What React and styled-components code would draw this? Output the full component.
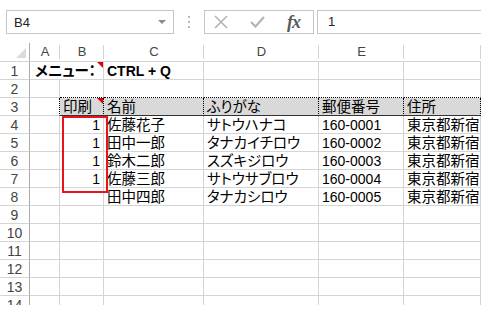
import React from 'react'
import styled, { createGlobalStyle } from 'styled-components'

const GlobalStyle = createGlobalStyle`
  html, body { margin: 0; padding: 0; background: #fff; }
  body { font-family: "Liberation Sans", "Noto Sans CJK JP", sans-serif; }
`

const Screen = styled.div`
  width: 481px;
  height: 313px;
  overflow: hidden;
  background: #fff;
`

const FormulaBar = styled.div`
  height: 43px;
  box-sizing: border-box;
  padding: 10px 0 0 6px;
  display: flex;
  align-items: flex-start;
`

const NameBox = styled.div`
  width: 168px;
  height: 24px;
  box-sizing: border-box;
  border: 1px solid #c6c6c6;
  display: flex;
  align-items: center;
  justify-content: space-between;
  padding: 0 7px 0 7px;
  font-size: 13px;
  color: #222;
`

const DropArrow = styled.span`
  width: 0;
  height: 0;
  border-left: 4px solid transparent;
  border-right: 4px solid transparent;
  border-top: 4px solid #8a8a8a;
`

const Grip = styled.div`
  width: 30px;
  height: 24px;
  display: flex;
  flex-direction: column;
  align-items: center;
  justify-content: center;
  gap: 3px;
  span {
    width: 2px;
    height: 2px;
    background: #b8b8b8;
  }
`

const FxBox = styled.div`
  width: 110px;
  height: 24px;
  box-sizing: border-box;
  border: 1px solid #c6c6c6;
  display: flex;
  align-items: center;
  padding-left: 9px;
  gap: 22px;
`

const FxLabel = styled.span`
  font-family: "Liberation Serif", serif;
  font-style: italic;
  font-weight: bold;
  font-size: 18px;
  color: #5a5a5a;
  letter-spacing: -1px;
`

const FormulaInput = styled.div`
  flex: 1;
  height: 24px;
  margin-left: 3px;
  box-sizing: border-box;
  border: 1px solid #c6c6c6;
  border-right: none;
  padding-left: 10px;
  font-size: 13px;
  line-height: 22px;
  color: #222;
`

const Sheet = styled.div`
  position: relative;
  height: 262px;
  overflow: hidden;
  display: grid;
  grid-template-columns: 30px 30px 44px 100px 115px 85px 1fr;
  grid-template-rows: 19px;
  grid-auto-rows: 18px;
`

const Corner = styled.div`
  box-sizing: border-box;
  border-right: 1px solid #ababab;
  border-bottom: 1px solid #d4d4d4;
  display: flex;
  align-items: flex-end;
  justify-content: flex-end;
  padding: 0 3px 3px 0;
`

const ColHead = styled.div`
  box-sizing: border-box;
  border-bottom: 1px solid #d4d4d4;
  position: relative;
  text-align: center;
  font-size: 13px;
  line-height: 18px;
  color: #444;
  &::after {
    content: '';
    position: absolute;
    right: 0;
    top: 2px;
    bottom: 2px;
    width: 1px;
    background: #d4d4d4;
  }
`

const RowHead = styled.div`
  box-sizing: border-box;
  border-right: 1px solid #ababab;
  border-bottom: 1px solid #d4d4d4;
  text-align: center;
  font-size: 14px;
  line-height: 18px;
  color: #444;
`

const Cell = styled.div`
  position: relative;
  box-sizing: border-box;
  grid-column: ${p => (p.$span ? `span ${p.$span}` : 'auto')};
  border-right: 1px ${p => (p.$dotRight ? 'dotted #000' : 'solid #d4d4d4')};
  border-bottom: 1px ${p => (p.$dotBottom ? 'dotted #000' : p.$darkBottom ? 'solid #333' : 'solid #d4d4d4')};
  background: ${p => (p.$shade ? '#d9d9d9' : 'transparent')};
  padding: 0 ${p => (p.$pad ? p.$pad : '3px')} 0 3px;
  font-size: ${p => (p.$num ? '14px' : '14.5px')};
  font-feature-settings: "palt";
  font-weight: ${p => (p.$bold ? 'bold' : 'normal')};
  line-height: 18px;
  text-align: ${p => (p.$right ? 'right' : 'left')};
  white-space: nowrap;
  overflow: ${p => (p.$clip ? 'hidden' : 'visible')};
  color: #000;
  z-index: ${p => (p.$over ? 1 : 0)};
`

const Comment = styled.span`
  position: absolute;
  top: 0;
  right: 0;
  width: 0;
  height: 0;
  border-top: 6px solid #e00000;
  border-left: 6px solid transparent;
`

const Shape = styled.div`
  position: absolute;
  left: 62px;
  top: 73px;
  width: 46px;
  height: 77px;
  box-sizing: border-box;
  border: 2px solid #e8141c;
  z-index: 2;
`

const people = [
  { mark: '1', name: '佐藤花子', kana: 'サトウハナコ', zip: '160-0001' },
  { mark: '1', name: '田中一郎', kana: 'タナカイチロウ', zip: '160-0002' },
  { mark: '1', name: '鈴木二郎', kana: 'スズキジロウ', zip: '160-0003' },
  { mark: '1', name: '佐藤三郎', kana: 'サトウサブロウ', zip: '160-0004' },
  { mark: '', name: '田中四郎', kana: 'タナカシロウ', zip: '160-0005' },
]

function CloseIcon() {
  return (
    <svg width="14" height="14" viewBox="0 0 14 14">
      <path d="M1 1 L13 13 M13 1 L1 13" stroke="#b4b4b4" strokeWidth="1.6" fill="none" />
    </svg>
  )
}

function CheckIcon() {
  return (
    <svg width="15" height="12" viewBox="0 0 15 12">
      <path d="M1 6 L5.5 10.5 L14 1" stroke="#b4b4b4" strokeWidth="2.2" fill="none" />
    </svg>
  )
}

function EmptyRow({ n }) {
  return (
    <>
      <RowHead>{n}</RowHead>
      <Cell /><Cell /><Cell /><Cell /><Cell /><Cell />
    </>
  )
}

export default function App() {
  return (
    <Screen>
      <GlobalStyle />
      <FormulaBar>
        <NameBox>
          B4
          <DropArrow />
        </NameBox>
        <Grip><span /><span /><span /></Grip>
        <FxBox>
          <CloseIcon />
          <CheckIcon />
          <FxLabel>fx</FxLabel>
        </FxBox>
        <FormulaInput>1</FormulaInput>
      </FormulaBar>

      <Sheet>
        <Corner>
          <svg width="10" height="10" viewBox="0 0 10 10">
            <path d="M10 0 L10 10 L0 10 Z" fill="#dcdcdc" />
          </svg>
        </Corner>
        {['A', 'B', 'C', 'D', 'E', ''].map((c, i) => <ColHead key={i}>{c}</ColHead>)}

        <RowHead>1</RowHead>
        <Cell $span={2} $right $bold $pad="7px">
          メニュー：
          <Comment />
        </Cell>
        <Cell $bold $num $over>CTRL + Q</Cell>
        <Cell /><Cell /><Cell />

        <RowHead>2</RowHead>
        <Cell />
        <Cell $dotBottom /><Cell $dotBottom /><Cell $dotBottom /><Cell $dotBottom /><Cell $dotBottom />

        <RowHead>3</RowHead>
        <Cell $dotRight />
        <Cell $shade $dotRight $darkBottom>印刷<Comment /></Cell>
        <Cell $shade $dotRight $darkBottom>名前</Cell>
        <Cell $shade $dotRight $darkBottom>ふりがな</Cell>
        <Cell $shade $dotRight $darkBottom>郵便番号</Cell>
        <Cell $shade $dotRight $darkBottom>住所</Cell>

        {people.map((p, i) => (
          <React.Fragment key={p.zip}>
            <RowHead>{i + 4}</RowHead>
            <Cell />
            <Cell $right $num>{p.mark}</Cell>
            <Cell>{p.name}</Cell>
            <Cell>{p.kana}</Cell>
            <Cell $num>{p.zip}</Cell>
            <Cell $clip>東京都新宿区</Cell>
          </React.Fragment>
        ))}

        {[9, 10, 11, 12, 13, 14].map(n => <EmptyRow key={n} n={n} />)}

        <Shape />
      </Sheet>
    </Screen>
  )
}
